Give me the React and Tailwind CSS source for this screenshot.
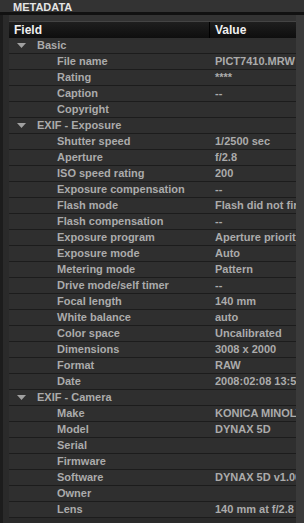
const groups = [
  {
    name: 'Basic',
    rows: [
      ['File name', 'PICT7410.MRW'],
      ['Rating', '****'],
      ['Caption', '--'],
      ['Copyright', ''],
    ],
  },
  {
    name: 'EXIF - Exposure',
    rows: [
      ['Shutter speed', '1/2500 sec'],
      ['Aperture', 'f/2.8'],
      ['ISO speed rating', '200'],
      ['Exposure compensation', '--'],
      ['Flash mode', 'Flash did not fire'],
      ['Flash compensation', '--'],
      ['Exposure program', 'Aperture priority'],
      ['Exposure mode', 'Auto'],
      ['Metering mode', 'Pattern'],
      ['Drive mode/self timer', '--'],
      ['Focal length', '140 mm'],
      ['White balance', 'auto'],
      ['Color space', 'Uncalibrated'],
      ['Dimensions', '3008 x 2000'],
      ['Format', 'RAW'],
      ['Date', '2008:02:08 13:50:12'],
    ],
  },
  {
    name: 'EXIF - Camera',
    rows: [
      ['Make', 'KONICA MINOLTA'],
      ['Model', 'DYNAX 5D'],
      ['Serial', ''],
      ['Firmware', ''],
      ['Software', 'DYNAX 5D v1.00'],
      ['Owner', ''],
      ['Lens', '140 mm at f/2.8'],
    ],
  },
]

function Row({ children, value }) {
  return (
    <div className="flex h-4 border-b border-[#1c1c1c] bg-[#2f2f2f] text-[#ababab]">
      <div className="flex w-[200px] shrink-0 items-center overflow-hidden whitespace-nowrap">{children}</div>
      <div className="flex flex-1 items-center overflow-hidden whitespace-nowrap pl-[6px]">{value}</div>
    </div>
  )
}

export default function App() {
  return (
    <div
      className="h-[523px] w-[304px] overflow-hidden bg-[#2a2a2a] text-[11px] font-bold leading-none"
      style={{ fontFamily: '"Liberation Sans", Arial, sans-serif' }}
    >
      <div className="flex h-[12px] items-center bg-[#333333] pl-[13px] pt-[2px] text-[11px] leading-[10px] text-[#e4e4e4]">
        METADATA
      </div>
      <div className="h-[3px] bg-[#111111]" />
      <div className="flex h-[508px]">
        <div className="w-[3px] bg-[#1c1c1c]" />
        <div className="w-[6px] bg-[#2a2a2a]" />
        <div className="flex min-w-0 flex-1 flex-col">
          <div className="h-[6px] bg-[#333333]" />
          <div className="flex h-[17px] border-t border-[#444444] bg-gradient-to-b from-[#1e1e1e] to-[#0e0e0e] text-[12px] text-[#f0f0f0]">
            <div className="flex w-[201px] shrink-0 items-center border-r border-[#000000] pl-[5px]">Field</div>
            <div className="flex flex-1 items-center pl-[5px]">Value</div>
          </div>
          {groups.map((g) => (
            <div key={g.name}>
              <Row value="">
                <svg width="9" height="5" viewBox="0 0 9 5" className="ml-[8px] mr-[11px]">
                  <path d="M0 0 H9 L4.5 5 Z" fill="#a0a0a0" />
                </svg>
                {g.name}
              </Row>
              {g.rows.map(([k, v]) => (
                <Row key={k} value={v}>
                  <span className="pl-[48px]">{k}</span>
                </Row>
              ))}
            </div>
          ))}
        </div>
        <div className="w-[8px] bg-[#3a3a3a]" />
      </div>
    </div>
  )
}
